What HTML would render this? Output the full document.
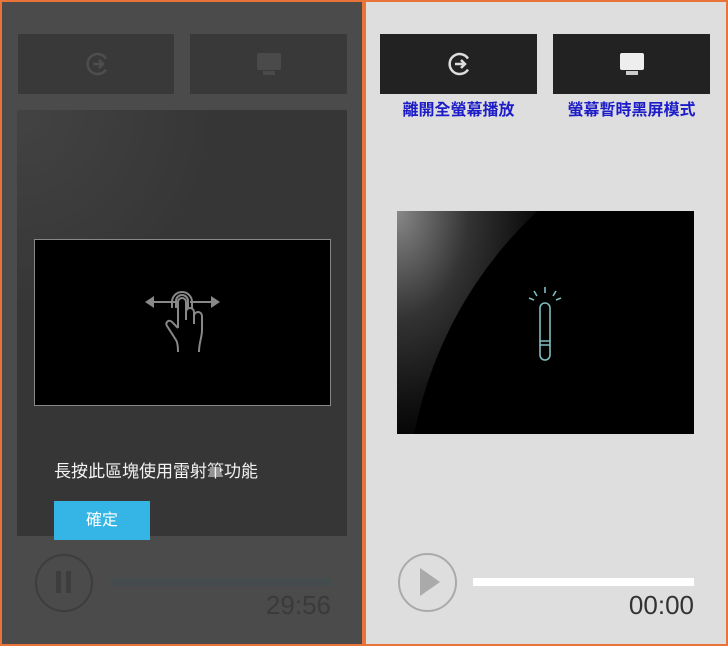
<!DOCTYPE html>
<html><head><meta charset="utf-8"><style>
html,body{margin:0;width:728px;height:646px;overflow:hidden}
body{position:relative;background:#e8743a;font-family:"Liberation Sans","Noto Sans CJK TC",sans-serif}
.a{position:absolute}
</style></head><body>
<div class="a" style="left:2px;top:2px;width:360px;height:642px;background:#4b4b4b"></div>
<div class="a" style="left:366px;top:2px;width:360px;height:642px;background:#dedede"></div>
<!-- left -->
<div class="a" style="left:18px;top:34px;width:156px;height:60px;background:#393939"></div>
<div class="a" style="left:190px;top:34px;width:157px;height:60px;background:#393939"></div>
<svg class="a" style="left:84px;top:50px" width="28" height="28" viewBox="0 0 28 28"><path d="M22 8.5 A10 10 0 1 0 22 19.5" fill="none" stroke="#4e4e4e" stroke-width="2.5"/><path d="M9 14h10M15 10l4 4-4 4" fill="none" stroke="#4e4e4e" stroke-width="2.5"/></svg>
<div class="a" style="left:257px;top:53px;width:24px;height:17px;background:#4a4a4a;border-radius:2px"></div>
<div class="a" style="left:263px;top:71px;width:12px;height:4px;background:#4a4a4a"></div>
<div class="a" style="left:17px;top:110px;width:330px;height:426px;background:#363636;overflow:hidden"><div style="position:absolute;left:0;top:0;width:330px;height:200px;background:radial-gradient(ellipse 200px 200px at 0% 0%,#434343 0%,#363636 100%)"></div></div>
<div class="a" style="left:34px;top:239px;width:295px;height:165px;background:#000;border:1px solid #888"></div>
<svg class="a" style="left:140px;top:288px" width="84" height="70" viewBox="0 0 84 70"><g fill="none" stroke="#888" stroke-width="2"><path d="M10 14h28M50 14h25"/><path d="M36 20v-7a6 6 0 0 1 12 0v7M32 20v-6a10 10 0 0 1 20 0v6"/><path d="M38 40V14a4 4 0 0 1 8 0v18M46 24a4 4 0 0 1 8 0v12M54 28a4 4 0 0 1 8 0v14c0 8-3 12-3 22M38 40l-6-6a3 3 0 0 0-5 4l9 14c2 3 2 8 2 12"/></g><path d="M5 14l9-6v12zM80 14l-9-6v12z" fill="#888"/></svg>
<div class="a" style="left:54px;top:457px;color:#f2f2f2;font-size:17px">長按此區塊使用雷射筆功能</div>
<div class="a" style="left:54px;top:501px;width:96px;height:39px;background:#35b5e5;color:#fff;font-size:16px;line-height:39px;text-align:center">確定</div>
<div class="a" style="left:35px;top:554px;width:54px;height:54px;border:2px solid #3d3d3d;border-radius:50%"></div>
<div class="a" style="left:56px;top:571px;width:5px;height:22px;background:#3d3d3d"></div>
<div class="a" style="left:66px;top:571px;width:5px;height:22px;background:#3d3d3d"></div>
<div class="a" style="left:110px;top:578px;width:221px;height:8px;background:#444c4e"></div>
<div class="a" style="left:231px;top:590px;width:100px;text-align:right;color:#3a3a3a;font-size:26px">29:56</div>
<!-- right -->
<div class="a" style="left:380px;top:34px;width:157px;height:60px;background:#222"></div>
<div class="a" style="left:553px;top:34px;width:157px;height:60px;background:#222"></div>
<svg class="a" style="left:446px;top:50px" width="28" height="28" viewBox="0 0 28 28"><path d="M22 8.5 A10 10 0 1 0 22 19.5" fill="none" stroke="#ddd" stroke-width="2.5"/><path d="M9 14h10M15 10l4 4-4 4" fill="none" stroke="#ddd" stroke-width="2.5"/></svg>
<div class="a" style="left:620px;top:53px;width:24px;height:17px;background:#eee;border-radius:2px"></div>
<div class="a" style="left:626px;top:71px;width:12px;height:4px;background:#ccc"></div>
<div class="a" style="left:380px;top:96px;width:157px;text-align:center;color:#1c1cc8;font-size:16px;font-weight:bold">離開全螢幕播放</div>
<div class="a" style="left:553px;top:96px;width:157px;text-align:center;color:#1c1cc8;font-size:16px;font-weight:bold">螢幕暫時黑屏模式</div>
<div class="a" style="left:397px;top:211px;width:297px;height:223px;background:radial-gradient(ellipse 160px 240px at 0% 0%,#888 0%,#333 45%,#111 80%,#000 100%);overflow:hidden"><div style="position:absolute;left:10px;top:-110px;width:820px;height:820px;border-radius:50%;background:#000"></div></div>
<svg class="a" style="left:525px;top:283px" width="40" height="80" viewBox="0 0 40 80"><g fill="none" stroke="#7fbcbf" stroke-width="1.6"><rect x="15" y="20" width="10" height="57" rx="5"/><path d="M15 58h10M15 62h10M20 4v6M9 8l3 5M31 8l-3 5M4 15l5 2M36 15l-5 2"/></g></svg>
<div class="a" style="left:398px;top:553px;width:55px;height:55px;border:2px solid #aaa;border-radius:50%"></div>
<svg class="a" style="left:418px;top:566px" width="24" height="32"><path d="M2 2L22 16L2 30Z" fill="#aaa"/></svg>
<div class="a" style="left:473px;top:578px;width:221px;height:8px;background:#fff"></div>
<div class="a" style="left:594px;top:590px;width:100px;text-align:right;color:#333;font-size:26px">00:00</div>
</body></html>
